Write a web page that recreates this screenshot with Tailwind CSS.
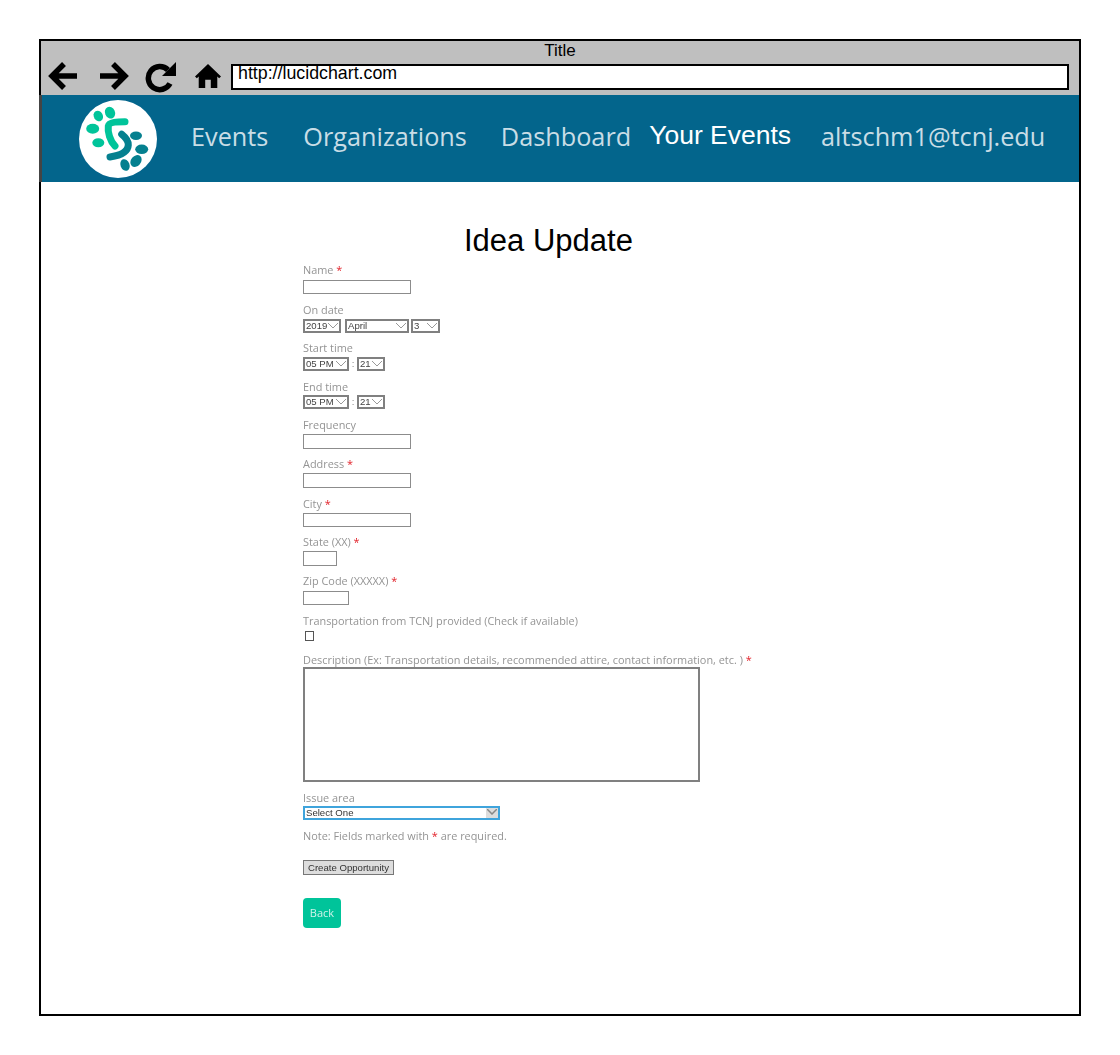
<!DOCTYPE html>
<html lang="en">

<head>
    <meta charset="UTF-8">
    <meta name="viewport" content="width=device-width, initial-scale=1.0">
    <title>Idea Update</title>
    <script src="https://cdn.jsdelivr.net/npm/@tailwindcss/browser@4"></script>
</head>

<body class="bg-white font-['Liberation_Sans',sans-serif]">
    <div class="ml-[39px] mt-[39px] w-[1042px] h-[977px] border-2 border-black flex flex-col">
        <!-- browser chrome -->
        <div class="bg-[#bfbfbf] h-[54px] shrink-0 relative">
            <div class="text-center text-[17px] leading-[20px] h-[18px] text-black">Title</div>
            <div class="flex items-start pl-[7px] pt-[2px]">
                <svg class="w-[30px] h-[30px]" viewBox="0 0 30 30" fill="none" stroke="black" stroke-width="5.5">
                    <path d="M29 15H5M16 3L4 15l12 12" />
                </svg>
                <svg class="w-[30px] h-[30px] ml-[21px]" viewBox="0 0 30 30" fill="none" stroke="black" stroke-width="5.5">
                    <path d="M1 15h24M14 3l12 12-12 12" />
                </svg>
                <svg class="w-[32px] h-[32px] ml-[16px]" viewBox="0 0 32 32" fill="none">
                    <path d="M25 22.5A11.5 11.5 0 1 1 23 9" stroke="black" stroke-width="5.5" />
                    <path d="M17 15L31 15V1z" fill="black" />
                </svg>
                <svg class="w-[26px] h-[26px] mt-[2px] ml-[18px]" viewBox="0 0 28 28" fill="black">
                    <path d="M14 1L0 14.5l2 2L4 14.6V27h7v-9h6v9h7V14.6l2 1.9 2-2z" />
                </svg>
                <div class="ml-[10px] mt-[3px] flex-1 mr-[10px] h-[26px] bg-white border-2 border-black text-[17.8px] leading-[15px] pl-[5px] text-black">http://lucidchart.com</div>
            </div>
        </div>

        <!-- site nav -->
        <nav class="bg-[#03658c] h-[87px] shrink-0 flex items-center border-l-[3px] border-[#444444] -ml-[2px] font-['Open_Sans',sans-serif] text-[25.25px] text-[#c9dde6] whitespace-nowrap">
            <svg class="w-[80px] h-[80px] ml-[36px] shrink-0" viewBox="0 0 80 80">
                <circle cx="40" cy="40" r="39" fill="white" />
                <g fill="#00c49a">
                    <ellipse cx="32" cy="13.7" rx="5" ry="6" transform="rotate(-25 32 13.7)" />
                    <ellipse cx="20.3" cy="17" rx="4.5" ry="5.5" transform="rotate(-30 20.3 17)" />
                    <ellipse cx="14.7" cy="29.7" rx="6.5" ry="5" />
                    <ellipse cx="20.3" cy="43.7" rx="6" ry="4.5" />
                </g>
                <path d="M47 22.7C40 22.7 31 23 30.3 27C29.5 33 32 42 37 47" fill="none" stroke="#00c49a" stroke-width="7" stroke-linecap="round" />
                <path d="M43.7 35.3C47 38 50.5 42 50.3 46C50 52 45 56 32 58" fill="none" stroke="#05808f" stroke-width="7" stroke-linecap="round" />
                <g fill="#05808f">
                    <ellipse cx="58" cy="36.7" rx="6" ry="4.2" />
                    <ellipse cx="63.7" cy="50.3" rx="6.5" ry="4.8" />
                    <ellipse cx="58" cy="62" rx="5" ry="6.5" transform="rotate(40 58 62)" />
                    <ellipse cx="47" cy="66" rx="4.5" ry="6" transform="rotate(-20 47 66)" />
                </g>
            </svg>
            <a class="ml-[33px] -mt-[3px]">Events</a>
            <a class="ml-[35px] -mt-[3px]">Organizations</a>
            <a class="ml-[34px] -mt-[3px]">Dashboard</a>
            <a class="ml-[18px] -mt-[6px] text-[26.5px] text-white font-['Liberation_Sans',sans-serif]">Your Events</a>
            <a class="ml-[30px] -mt-[3px]">altschm1@tcnj.edu</a>
        </nav>

        <!-- form -->
        <main class="pl-[262px] relative">
            <h1 class="text-[31px] leading-[36px] text-black mt-[41px] ml-[161px]">Idea Update</h1>
            <form class="font-['Open_Sans',sans-serif] text-[10.9px] leading-[14px] text-[#949494] blur-[0.5px]">
                <div class="mt-[4px]">
                    <label class="block h-[17px]">Name <span class="text-[#e2222a]">*</span></label>
                    <input type="text" class="block w-[108px] h-[14px] border border-[#8c8c8c] bg-white">
                </div>
                <div class="mt-[9px]">
                    <label class="block h-[16px]">On date</label>
                    <div class="flex font-['Liberation_Sans',sans-serif] text-[9.6px] text-[#444444]">
                        <div class="relative w-[38px] h-[14px] border-2 border-[#808080] leading-[10px] pl-[1px]">2019
                            <svg class="absolute right-[1px] top-[2px] w-[10px] h-[6px]" viewBox="0 0 10 6" fill="none" stroke="#999999"><path d="M0 0l5 5 5-5" /></svg>
                        </div>
                        <div class="relative ml-[4px] w-[64px] h-[14px] border-2 border-[#808080] leading-[10px] pl-[1px]">April
                            <svg class="absolute right-[1px] top-[2px] w-[10px] h-[6px]" viewBox="0 0 10 6" fill="none" stroke="#999999"><path d="M0 0l5 5 5-5" /></svg>
                        </div>
                        <div class="relative ml-[2px] w-[29px] h-[14px] border-2 border-[#808080] leading-[10px] pl-[1px]">3
                            <svg class="absolute right-[1px] top-[2px] w-[10px] h-[6px]" viewBox="0 0 10 6" fill="none" stroke="#999999"><path d="M0 0l5 5 5-5" /></svg>
                        </div>
                    </div>
                </div>
                <div class="mt-[8px]">
                    <label class="block h-[16px]">Start time</label>
                    <div class="flex items-center font-['Liberation_Sans',sans-serif] text-[9.6px] text-[#444444]">
                        <div class="relative w-[46px] h-[14px] border-2 border-[#808080] leading-[10px] pl-[1px]">05 PM
                            <svg class="absolute right-[1px] top-[2px] w-[10px] h-[6px]" viewBox="0 0 10 6" fill="none" stroke="#999999"><path d="M0 0l5 5 5-5" /></svg>
                        </div>
                        <span class="w-[8px] text-center text-[#8a8a8a]">:</span>
                        <div class="relative w-[28px] h-[14px] border-2 border-[#808080] leading-[10px] pl-[1px]">21
                            <svg class="absolute right-[1px] top-[2px] w-[10px] h-[6px]" viewBox="0 0 10 6" fill="none" stroke="#999999"><path d="M0 0l5 5 5-5" /></svg>
                        </div>
                    </div>
                </div>
                <div class="mt-[9px]">
                    <label class="block h-[15px]">End time</label>
                    <div class="flex items-center font-['Liberation_Sans',sans-serif] text-[9.6px] text-[#444444]">
                        <div class="relative w-[46px] h-[14px] border-2 border-[#808080] leading-[10px] pl-[1px]">05 PM
                            <svg class="absolute right-[1px] top-[2px] w-[10px] h-[6px]" viewBox="0 0 10 6" fill="none" stroke="#999999"><path d="M0 0l5 5 5-5" /></svg>
                        </div>
                        <span class="w-[8px] text-center text-[#8a8a8a]">:</span>
                        <div class="relative w-[28px] h-[14px] border-2 border-[#808080] leading-[10px] pl-[1px]">21
                            <svg class="absolute right-[1px] top-[2px] w-[10px] h-[6px]" viewBox="0 0 10 6" fill="none" stroke="#999999"><path d="M0 0l5 5 5-5" /></svg>
                        </div>
                    </div>
                </div>
                <div class="mt-[9px]">
                    <label class="block h-[16px]">Frequency</label>
                    <input type="text" class="block w-[108px] h-[15px] border border-[#8c8c8c] bg-white">
                </div>
                <div class="mt-[8px]">
                    <label class="block h-[16px]">Address <span class="text-[#e2222a]">*</span></label>
                    <input type="text" class="block w-[108px] h-[15px] border border-[#8c8c8c] bg-white">
                </div>
                <div class="mt-[9px]">
                    <label class="block h-[16px]">City <span class="text-[#e2222a]">*</span></label>
                    <input type="text" class="block w-[108px] h-[14px] border border-[#8c8c8c] bg-white">
                </div>
                <div class="mt-[8px]">
                    <label class="block h-[16px]">State (XX) <span class="text-[#e2222a]">*</span></label>
                    <input type="text" class="block w-[34px] h-[15px] border border-[#8c8c8c] bg-white">
                </div>
                <div class="mt-[8px]">
                    <label class="block h-[17px]">Zip Code (XXXXX) <span class="text-[#e2222a]">*</span></label>
                    <input type="text" class="block w-[46px] h-[14px] border border-[#8c8c8c] bg-white">
                </div>
                <div class="mt-[9px]">
                    <label class="block h-[17px]">Transportation from TCNJ provided (Check if available)</label>
                    <div class="ml-[2px] w-[9px] h-[10px] border-[1.5px] border-[#555555]"></div>
                </div>
                <div class="mt-[12px]">
                    <label class="block h-[14px] whitespace-nowrap">Description (Ex: Transportation details, recommended attire, contact information, etc. ) <span class="text-[#e2222a]">*</span></label>
                    <textarea class="block w-[397px] h-[115px] border-2 border-[#808080] bg-white resize-none"></textarea>
                </div>
                <div class="mt-[9px]">
                    <label class="block h-[15px]">Issue area</label>
                    <div class="relative w-[197px] h-[14px] border-2 border-[#3fa4dc] font-['Liberation_Sans',sans-serif] text-[9.6px] leading-[10px] text-[#333333] pl-[1px]">Select One
                        <span class="absolute right-0 top-0 w-[12px] h-[10px] bg-[#dddddd]">
                            <svg class="ml-[1px] mt-[1px] w-[10px] h-[6px]" viewBox="0 0 10 6" fill="none" stroke="#888888" stroke-width="1.5"><path d="M0 0l5 5 5-5" /></svg>
                        </span>
                    </div>
                </div>
                <p class="mt-[9px] h-[14px]">Note: Fields marked with <span class="text-[#e2222a]">*</span> are required.</p>
                <button type="button" class="block mt-[17px] w-[91px] h-[15px] border border-[#777777] bg-[#dddddd] font-['Liberation_Sans',sans-serif] text-[9.6px] leading-[12px] text-[#333333]">Create Opportunity</button>
                <a class="flex items-center justify-center mt-[23px] w-[38px] h-[30px] rounded-[4px] bg-[#00c49a] text-[#cff3ea] text-[11px]">Back</a>
            </form>
        </main>
    </div>
</body>

</html>
